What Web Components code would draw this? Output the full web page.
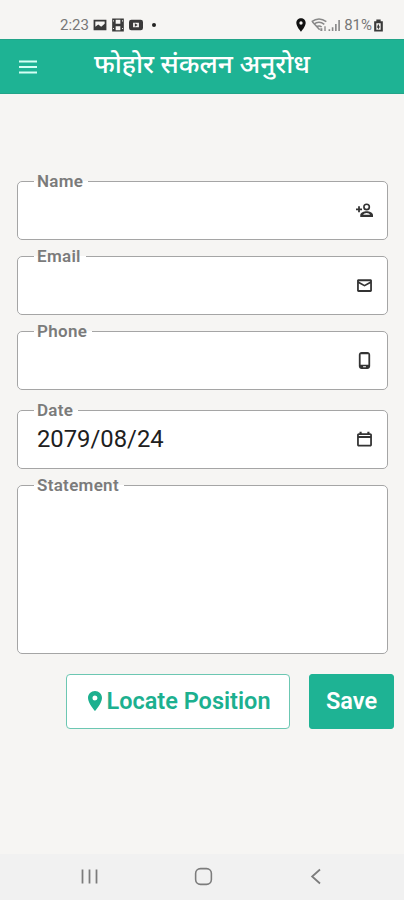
<!DOCTYPE html>
<html lang="ne">
<head>
  <meta charset="UTF-8">
  <meta name="viewport" content="width=device-width, initial-scale=1.0">
  <title>फोहोर संकलन अनुरोध</title>
  <style>
    body {
      margin: 0;
      background: #f6f5f3;
      font-family: Roboto, "Noto Sans", sans-serif;
    }
  </style>
</head>
<body>
  <request-screen></request-screen>

  <script>
    const icons = {
      person: '<path d="M0 9h3V6h2.500v3h3v2.500h-3v3H3v-3H0z"/><path fill-rule="evenodd" d="M15 2a5 5 0 1 0 0 10 5 5 0 0 0 0-10zm0 2.100a2.700 2.700 0 1 1 0 5.400 2.700 2.700 0 0 1 0-5.400zM15 13c-3.500 0-9 1.700-9 5.500V21h18v-2.500c0-3.800-5-5.500-9-5.500zm-5 5c.5-1 2.800-2.500 5-2.500s4.500 1.500 5 2.500z"/>',
      mail: '<path fill-rule="evenodd" d="M22.500 5c0-1.100-.9-2-2-2h-17c-1.100 0-2 .9-2 2v14c0 1.100.9 2 2 2h17c1.100 0 2-.9 2-2zM20 6.500 12 11 4 6.500V6h16zm0 12H4V9l8 4.500L20 9z"/>',
      phone: '<path fill-rule="evenodd" d="M16 0H8C5.800 0 4 1.800 4 4v16c0 2.200 1.800 4 4 4h8c2.200 0 4-1.800 4-4V4c0-2.200-1.800-4-4-4zm1.500 18h-11V3h11zM14 21.500h-4V20h4z"/>',
      calendar: '<path fill-rule="evenodd" d="M20 3h-1V1h-3v2H8V1H5v2H4C2.500 3 1.500 4 1.500 5.500v14C1.500 21 2.500 22 4 22h16c1.500 0 2.500-1 2.500-2.500v-14C22.500 4 21.500 3 20 3zm0 16.500H4V10h16zM20 7H4V5.500h16z"/>',
      pin: '<path fill-rule="evenodd" d="M12 2C8.100 2 5 5.100 5 9c0 5.200 7 13 7 13s7-7.800 7-13c0-3.900-3.100-7-7-7zm0 9.500a2.500 2.500 0 1 1 0-5 2.500 2.500 0 0 1 0 5z"/>',
      menu: '<path d="M3 5.500h18v2H3zM3 11h18v2H3zM3 16.500h18v2H3z"/>',
      image: '<path fill-rule="evenodd" d="M1 3h22v18H1zm3 3v9l5-4 5 4 6-5V6z"/>',
      disk: '<path fill-rule="evenodd" d="M2 1h20v22H2zm6 2v7h8V3zm0 11v7h8v-7zM3.500 4v2H5V4zM19 4v2h1.500V4zM3.500 17v2H5v-2zM19 17v2h1.500v-2z"/>',
      video: '<path fill-rule="evenodd" d="M4 3h16q4 0 4 4v10q0 4-4 4H4q-4 0-4-4V7q0-4 4-4zm3 5v8h10V8zm3 1 5 3-5 3z"/>',
      wifi: '<path d="M1 7Q12-1 23 7M4 11q8-6 16 0M8 15q4-3 8 0M2 7l11 12" fill="none" stroke="currentColor" stroke-width="2.300"/><path d="M14 17h3v4h-3zM20 14h2v7h-2z"/>',
      signal: '<path d="M1 19h3v3H1zM7 15h3v7H7zM13 9h3v13h-3zM19 2h3v20h-3z"/>',
      battery: '<path fill-rule="evenodd" d="M8 1h8v3h4v19H4V4h4zm0 7v12h8V8zm3 2h2v4h2l-4 6v-4H9z"/>',
      recents: '<path d="M4 4v16M12 4v16M20 4v16" fill="none" stroke="currentColor" stroke-width="2"/>',
      home: '<rect x="3" y="3" width="18" height="18" rx="5.500" fill="none" stroke="currentColor" stroke-width="1.800"/>',
      back: '<path d="M16 4 7 12l9 8" fill="none" stroke="currentColor" stroke-width="2"/>'
    };

    class AppIcon extends HTMLElement {
      connectedCallback() {
        this.attachShadow({ mode: 'open' });
        this.shadowRoot.innerHTML = `
          <style>
            :host {
              display: block;
              flex: none;
              width: var(--icon-size, 18px);
              height: var(--icon-size, 18px);
            }
            svg {
              display: block;
              width: 100%;
              height: 100%;
              fill: currentColor;
            }
          </style>
          <svg viewBox="0 0 24 24" aria-hidden="true">${icons[this.getAttribute('name')]}</svg>
        `;
      }
    }
    customElements.define('app-icon', AppIcon);

    class StatusBar extends HTMLElement {
      connectedCallback() {
        this.attachShadow({ mode: 'open' });
        this.shadowRoot.innerHTML = `
          <style>
            :host {
              display: flex;
              justify-content: space-between;
              box-sizing: border-box;
              height: 39px;
              padding: 11px 19px 0 60px;
              color: #3a3a3a;
              font-size: 15px;
              line-height: 28px;
            }
            div {
              display: flex;
              align-items: center;
              height: 28px;
            }
            span {
              color: #777;
            }
            .left app-icon {
              --icon-size: 14px;
              margin-left: 4px;
            }
            .dot {
              width: 4px;
              height: 4px;
              margin-left: 9px;
              border-radius: 50%;
              background: #222;
            }
            .right {
              --icon-size: 13px;
            }
            .pin {
              --icon-size: 16px;
              color: #111;
              margin-right: 2px;
            }
            .wifi {
              --icon-size: 16px;
              color: #888;
              margin-right: 1px;
            }
            .signal {
              color: #888;
              margin-right: 3px;
            }
          </style>
          <div class="left">
            <span>2:23</span>
            <app-icon name="image"></app-icon>
            <app-icon name="disk"></app-icon>
            <app-icon name="video"></app-icon>
            <i class="dot"></i>
          </div>
          <div class="right">
            <app-icon class="pin" name="pin"></app-icon>
            <app-icon class="wifi" name="wifi"></app-icon>
            <app-icon class="signal" name="signal"></app-icon>
            <span>81%</span>
            <app-icon name="battery"></app-icon>
          </div>
        `;
      }
    }
    customElements.define('status-bar', StatusBar);

    class AppHeader extends HTMLElement {
      connectedCallback() {
        this.attachShadow({ mode: 'open' });
        this.shadowRoot.innerHTML = `
          <style>
            :host {
              display: grid;
              grid-template-columns: 76px 1fr 76px;
              align-items: center;
              height: 55px;
              background: #1eb394;
              color: #fff;
              box-shadow: inset 0 1px #22a488, inset 0 -1px #22a488;
            }
            app-icon {
              --icon-size: 24px;
              margin-left: 16px;
              color: #d4fff4;
            }
            h1 {
              margin: 0 0 5px;
              font-size: 26.3px;
              font-weight: 500;
              line-height: 36px;
              text-align: center;
              white-space: nowrap;
            }
          </style>
          <app-icon name="menu"></app-icon>
          <h1><slot></slot></h1>
        `;
      }
    }
    customElements.define('app-header', AppHeader);

    class FormField extends HTMLElement {
      connectedCallback() {
        const icon = this.getAttribute('icon');
        this.attachShadow({ mode: 'open' });
        this.shadowRoot.innerHTML = `
          <style>
            :host {
              display: block;
              height: 67px;
            }
            fieldset {
              box-sizing: border-box;
              height: 100%;
              min-width: 0;
              margin: 0;
              padding: 0 16px;
              border: 1px solid #a5a5a5;
              border-radius: 5px;
              background: #fff;
            }
            legend {
              height: 16px;
              padding: 0 5px 0 3px;
              color: #7b7b7b;
              font-size: 17px;
              font-weight: 600;
              line-height: 16px;
              letter-spacing: 0.3px;
            }
            .value {
              display: flex;
              align-items: center;
              justify-content: space-between;
              height: 42px;
              padding-left: 3px;
              font-size: 23.8px;
              color: #202020;
            }
            app-icon {
              --icon-size: 17px;
              margin: 1px -2px 0 0;
              color: #333;
            }
          </style>
          <fieldset>
            <legend>${this.getAttribute('label')}</legend>
            <div class="value">
              <span><slot></slot></span>
              ${icon ? `<app-icon name="${icon}"></app-icon>` : ''}
            </div>
          </fieldset>
        `;
      }
    }
    customElements.define('form-field', FormField);

    class ActionButton extends HTMLElement {
      connectedCallback() {
        this.attachShadow({ mode: 'open' });
        this.shadowRoot.innerHTML = `
          <style>
            :host {
              display: block;
              width: 224px;
              height: 55px;
            }
            :host([primary]) {
              width: 85px;
            }
            button {
              display: flex;
              align-items: center;
              justify-content: center;
              box-sizing: border-box;
              width: 100%;
              height: 100%;
              padding: 0 0 2px;
              border: 1px solid #6cc7b2;
              border-radius: 4px;
              background: #fff;
              color: #1cb08f;
              font: 600 23.5px Roboto, sans-serif;
              white-space: nowrap;
            }
            :host([primary]) button {
              border-color: #1eb394;
              border-radius: 3px;
              background: #1eb394;
              color: #fff;
            }
          </style>
          <button><slot></slot></button>
        `;
      }
    }
    customElements.define('action-button', ActionButton);

    class NavigationBar extends HTMLElement {
      connectedCallback() {
        this.attachShadow({ mode: 'open' });
        this.shadowRoot.innerHTML = `
          <style>
            :host {
              display: flex;
              align-items: center;
              justify-content: space-between;
              box-sizing: border-box;
              height: 46px;
              padding: 0 77px 1px 79px;
              background: #f1f1f1;
              color: #7c7c7c;
              --icon-size: 21px;
            }
          </style>
          <app-icon name="recents"></app-icon>
          <app-icon name="home"></app-icon>
          <app-icon name="back"></app-icon>
        `;
      }
    }
    customElements.define('navigation-bar', NavigationBar);

    class RequestScreen extends HTMLElement {
      connectedCallback() {
        this.attachShadow({ mode: 'open' });
        this.shadowRoot.innerHTML = `
          <style>
            :host {
              display: flex;
              flex-direction: column;
              height: 900px;
              overflow: hidden;
            }
            main {
              flex: 1;
              padding: 79px 16px 0 17px;
            }
            form-field {
              margin-bottom: 8px;
            }
            .date {
              margin-top: 12px;
            }
            .statement {
              height: 177px;
              margin-bottom: 0;
            }
            .actions {
              display: flex;
              justify-content: flex-end;
              gap: 19px;
              margin: 20px -6px 0 0;
            }
            .actions app-icon {
              --icon-size: 24px;
              margin: 0 -1px 0 -2px;
            }
          </style>
          <status-bar></status-bar>
          <app-header>फोहोर संकलन अनुरोध</app-header>
          <main>
            <form-field label="Name" icon="person"></form-field>
            <form-field label="Email" icon="mail"></form-field>
            <form-field label="Phone" icon="phone"></form-field>
            <form-field class="date" label="Date" icon="calendar">2079/08/24</form-field>
            <form-field class="statement" label="Statement"></form-field>
            <div class="actions">
              <action-button><app-icon name="pin"></app-icon>Locate Position</action-button>
              <action-button primary>Save</action-button>
            </div>
          </main>
          <navigation-bar></navigation-bar>
        `;
      }
    }
    customElements.define('request-screen', RequestScreen);
  </script>
</body>
</html>
